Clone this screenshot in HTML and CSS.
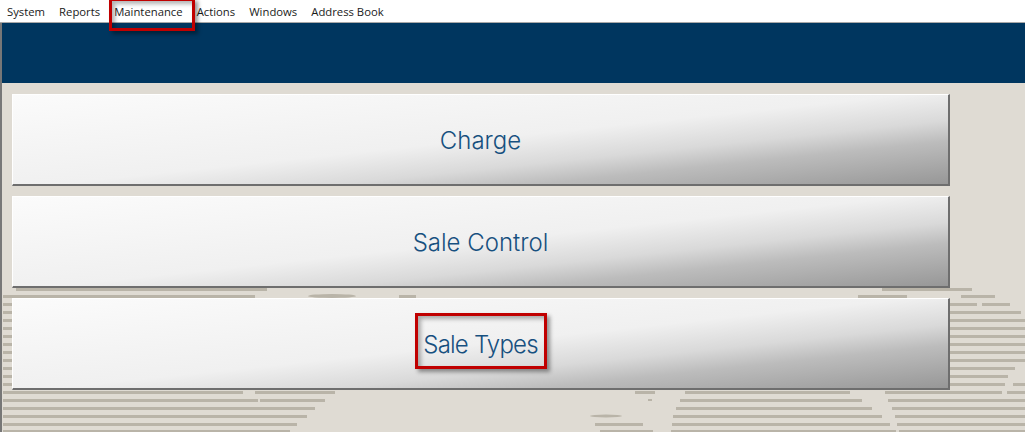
FILE: index.html
```html
<!DOCTYPE html>
<html>

<head>
    <link rel="stylesheet" href="styles.css">
</head>

<body>
    <nav class="menubar">
        <a>System</a>
        <a>Reports</a>
        <a>Maintenance</a>
        <a>Actions</a>
        <a>Windows</a>
        <a>Address Book</a>
    </nav>

    <main class="window">
        <!-- faded logo behind the buttons -->
        <svg class="watermark" width="1025" height="432" viewBox="0 0 1025 432">
            <g fill="#b9b4a8">
                <rect x="16" y="288" width="251" height="3" />
                <rect x="882" y="288" width="90" height="3" />
                <rect x="3" y="295" width="252" height="3" />
                <ellipse cx="332" cy="296" rx="24" ry="2" />
                <rect x="399" y="295" width="17" height="3" />
                <rect x="858" y="295" width="49" height="3" />
                <rect x="961" y="295" width="34" height="3" />
                <rect x="3" y="303" width="9" height="3" />
                <rect x="950" y="303" width="27" height="3" />
                <rect x="982" y="303" width="28" height="3" />
                <rect x="3" y="311" width="9" height="3" />
                <rect x="950" y="311" width="71" height="3" />
                <rect x="3" y="319" width="9" height="3" />
                <rect x="950" y="319" width="75" height="3" />
                <rect x="3" y="327" width="9" height="3" />
                <rect x="950" y="327" width="75" height="3" />
                <rect x="3" y="335" width="9" height="3" />
                <rect x="950" y="335" width="75" height="3" />
                <rect x="3" y="343" width="9" height="3" />
                <rect x="950" y="343" width="75" height="3" />
                <rect x="3" y="351" width="9" height="3" />
                <rect x="950" y="351" width="75" height="3" />
                <rect x="3" y="359" width="9" height="3" />
                <rect x="950" y="359" width="75" height="3" />
                <rect x="3" y="367" width="9" height="3" />
                <rect x="950" y="367" width="65" height="3" />
                <rect x="3" y="375" width="9" height="3" />
                <rect x="950" y="375" width="58" height="3" />
                <rect x="3" y="383" width="9" height="3" />
                <rect x="950" y="383" width="55" height="3" />
                <rect x="1013" y="383" width="12" height="3" />
                <rect x="3" y="391" width="240" height="3" />
                <rect x="255" y="391" width="80" height="3" />
                <rect x="635" y="391" width="20" height="3" />
                <rect x="685" y="391" width="165" height="3" />
                <rect x="885" y="391" width="117" height="3" />
                <rect x="1007" y="391" width="18" height="3" />
                <rect x="3" y="399" width="255" height="3" />
                <rect x="260" y="399" width="65" height="3" />
                <rect x="648" y="399" width="4" height="2" />
                <rect x="680" y="399" width="182" height="3" />
                <rect x="888" y="399" width="137" height="3" />
                <rect x="3" y="407" width="312" height="3" />
                <rect x="676" y="407" width="196" height="3" />
                <rect x="892" y="407" width="133" height="3" />
                <rect x="3" y="415" width="304" height="3" />
                <ellipse cx="606" cy="416" rx="16" ry="1.5" />
                <rect x="673" y="415" width="209" height="3" />
                <rect x="895" y="415" width="130" height="3" />
                <rect x="3" y="423" width="294" height="3" />
                <rect x="595" y="423" width="48" height="3" />
                <rect x="672" y="423" width="218" height="3" />
                <rect x="897" y="423" width="128" height="3" />
                <rect x="3" y="430" width="287" height="2" />
                <rect x="600" y="430" width="53" height="2" />
                <rect x="671" y="430" width="225" height="2" />
                <rect x="899" y="430" width="126" height="2" />
            </g>
        </svg>

        <header class="banner"></header>

        <div class="buttons">
            <button class="big-btn">Charge</button>
            <button class="big-btn">Sale Control</button>
            <button class="big-btn tight">Sale Types</button>
        </div>
    </main>

    <!-- red boxes drawn on the screenshot -->
    <div class="mark mark-menu"></div>
    <div class="mark mark-btn"></div>
</body>

</html>
```

FILE: styles.css
```css
html,
body {
    margin: 0;
    height: 100%;
    overflow: hidden;
}

body {
    position: relative;
    background: #dfdbd3;
    font-family: "Open Sans", sans-serif;
}

.menubar {
    display: flex;
    gap: 14px;
    height: 22px;
    padding-left: 7px;
    align-items: center;
    background: #fff;
    border-bottom: 1px solid #a8a8a8;
    font-size: 11.3px;
    color: #1a1a1a;
}

.window {
    position: relative;
    height: 409px;
    border-left: 2px solid #777;
}

.watermark {
    position: absolute;
    left: -2px;
    top: -23px;
}

.banner {
    position: relative;
    height: 60px;
    background: #00365f;
}

.buttons {
    position: relative;
    display: flex;
    flex-direction: column;
    gap: 10px;
    width: 938px;
    margin: 11px 0 0 10px;
}

.big-btn {
    display: block;
    box-sizing: border-box;
    height: 92px;
    padding: 2px 0 0;
    border: 0;
    border-top: 1px solid #fff;
    border-left: 1px solid #fff;
    border-right: 2px solid #6e6e6e;
    border-bottom: 2px solid #6e6e6e;
    background: linear-gradient(174deg, #fbfbfb 0%, #f0f0f0 50%, #d9d9d9 66%, #bcbcbc 77%, #979797 100%);
    font-family: "Inter", sans-serif;
    font-size: 24px;
    font-weight: 300;
    color: #17507f;
}

.tight {
    letter-spacing: -.8px;
}

.mark {
    position: absolute;
    box-sizing: border-box;
    border: 3px solid #c00000;
    box-shadow: 3px 3px 4px rgba(0, 0, 0, .4), inset 3px 3px 4px rgba(0, 0, 0, .3);
}

.mark-menu {
    left: 109px;
    top: -2px;
    width: 86px;
    height: 33px;
}

.mark-btn {
    left: 415px;
    top: 313px;
    width: 132px;
    height: 56px;
}
```
